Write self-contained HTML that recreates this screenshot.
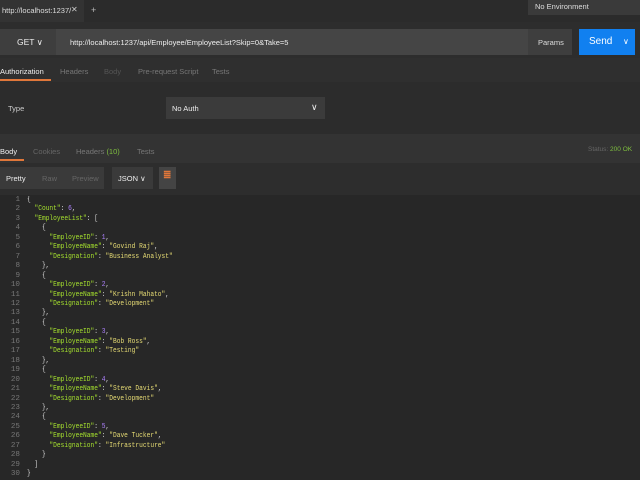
<!DOCTYPE html>
<html><head><style>
*{margin:0;padding:0;box-sizing:border-box}
body{width:640px;height:480px;background:#2a2a2a;font-family:"Liberation Sans",sans-serif;font-size:8px;color:#ccc;position:relative;overflow:hidden}
.a{position:absolute}
.code{font-family:"Liberation Mono",monospace;font-size:7.6px;line-height:9.45px;white-space:pre}
.k{color:#a6e22e}.s{color:#e6db74}.n{color:#ae81ff}.p{color:#ddd}
</style></head><body>
<div class="a" style="left:0;top:0;width:640px;height:22px;background:#2b2b2b"></div>
<div class="a" style="left:0;top:0;width:84px;height:22px;background:#333"></div>
<div class="a" style="left:2px;top:6px;color:#ddd;font-size:7.5px">http://localhost:1237/</div>
<div class="a" style="left:71px;top:5px;color:#ccc;font-size:8px">✕</div>
<div class="a" style="left:91px;top:5px;color:#bbb;font-size:9px">+</div>
<div class="a" style="left:528px;top:0;width:112px;height:15px;background:#3a3a3a"></div>
<div class="a" style="left:535px;top:2px;color:#ddd;font-size:7.5px">No Environment</div>
<div class="a" style="left:0;top:22px;width:640px;height:36px;background:#2d2d2d"></div>
<div class="a" style="left:0;top:29px;width:572px;height:26px;background:#454545"></div>
<div class="a" style="left:0;top:29px;width:56px;height:26px;background:#3e3e3e"></div>
<div class="a" style="left:17px;top:37px;color:#eee;font-size:8.5px">GET &#x2228;</div>
<div class="a" style="left:70px;top:38px;color:#eee;font-size:7.5px">http://localhost:1237/api/Employee/EmployeeList?Skip=0&amp;Take=5</div>
<div class="a" style="left:528px;top:29px;width:44px;height:26px;background:#3e3e3e"></div>
<div class="a" style="left:538px;top:38px;color:#ddd;font-size:7.5px">Params</div>
<div class="a" style="left:579px;top:29px;width:56px;height:26px;background:#1180f0"></div>
<div class="a" style="left:589px;top:36px;color:#fff;font-size:10px">Send</div>
<div class="a" style="left:623px;top:37px;color:#fff;font-size:8px">&#x2228;</div>
<div class="a" style="left:0;top:58px;width:640px;height:24px;background:#2f2f2f"></div>
<div class="a" style="left:0;top:67px;color:#eee;font-size:7.5px">Authorization</div>
<div class="a" style="left:0;top:79px;width:51px;height:2px;background:#e0773a"></div>
<div class="a" style="left:60px;top:67px;color:#777;font-size:7.5px">Headers</div>
<div class="a" style="left:104px;top:67px;color:#555;font-size:7.5px">Body</div>
<div class="a" style="left:138px;top:67px;color:#777;font-size:7.5px">Pre-request Script</div>
<div class="a" style="left:212px;top:67px;color:#777;font-size:7.5px">Tests</div>
<div class="a" style="left:0;top:82px;width:640px;height:52px;background:#2c2c2c"></div>
<div class="a" style="left:8px;top:104px;color:#ccc;font-size:7.5px">Type</div>
<div class="a" style="left:166px;top:97px;width:159px;height:22px;background:#3b3b3b"></div>
<div class="a" style="left:172px;top:104px;color:#eee;font-size:7.5px">No Auth</div>
<div class="a" style="left:311px;top:102px;color:#eee;font-size:9px">&#x2228;</div>
<div class="a" style="left:0;top:134px;width:640px;height:29px;background:#333"></div>
<div class="a" style="left:0;top:147px;color:#eee;font-size:7.5px">Body</div>
<div class="a" style="left:0;top:159px;width:24px;height:2px;background:#e0773a"></div>
<div class="a" style="left:33px;top:147px;color:#666;font-size:7.5px">Cookies</div>
<div class="a" style="left:76px;top:147px;color:#777;font-size:7.5px">Headers <span style="color:#7fbf3f">(10)</span></div>
<div class="a" style="left:137px;top:147px;color:#777;font-size:7.5px">Tests</div>
<div class="a" style="left:588px;top:146px;color:#666;font-size:6.5px">Status: <span style="color:#7fbf3f">200 OK</span></div>
<div class="a" style="left:0;top:163px;width:640px;height:32px;background:#2d2d2d"></div>
<div class="a" style="left:0;top:167px;width:104px;height:22px;background:#3a3a3a"></div>
<div class="a" style="left:6px;top:174px;color:#eee;font-size:7.5px">Pretty</div>
<div class="a" style="left:42px;top:174px;color:#666;font-size:7.5px">Raw</div>
<div class="a" style="left:72px;top:174px;color:#666;font-size:7.5px">Preview</div>
<div class="a" style="left:112px;top:167px;width:41px;height:22px;background:#3a3a3a"></div>
<div class="a" style="left:118px;top:174px;color:#eee;font-size:7.5px">JSON &#x2228;</div>
<div class="a" style="left:159px;top:167px;width:17px;height:22px;background:#444"></div>
<div class="a" style="left:163px;top:170px;color:#e0773a;font-size:10px;font-weight:bold">&#x2263;</div>
<div class="a" style="left:0;top:195px;width:640px;height:285px;background:#272727"></div>
<div class="a code" style="left:0;top:196px;width:20px;text-align:right;color:#777">1
2
3
4
5
6
7
8
9
10
11
12
13
14
15
16
17
18
19
20
21
22
23
24
25
26
27
28
29
30</div>
<div class="a code p" style="left:27px;top:196px;transform:scaleX(.82);transform-origin:0 0">{
  <span class="k">"Count"</span>: <span class="n">6</span>,
  <span class="k">"EmployeeList"</span>: [
    {
      <span class="k">"EmployeeID"</span>: <span class="n">1</span>,
      <span class="k">"EmployeeName"</span>: <span class="s">"Govind Raj"</span>,
      <span class="k">"Designation"</span>: <span class="s">"Business Analyst"</span>
    },
    {
      <span class="k">"EmployeeID"</span>: <span class="n">2</span>,
      <span class="k">"EmployeeName"</span>: <span class="s">"Krishn Mahato"</span>,
      <span class="k">"Designation"</span>: <span class="s">"Development"</span>
    },
    {
      <span class="k">"EmployeeID"</span>: <span class="n">3</span>,
      <span class="k">"EmployeeName"</span>: <span class="s">"Bob Ross"</span>,
      <span class="k">"Designation"</span>: <span class="s">"Testing"</span>
    },
    {
      <span class="k">"EmployeeID"</span>: <span class="n">4</span>,
      <span class="k">"EmployeeName"</span>: <span class="s">"Steve Davis"</span>,
      <span class="k">"Designation"</span>: <span class="s">"Development"</span>
    },
    {
      <span class="k">"EmployeeID"</span>: <span class="n">5</span>,
      <span class="k">"EmployeeName"</span>: <span class="s">"Dave Tucker"</span>,
      <span class="k">"Designation"</span>: <span class="s">"Infrastructure"</span>
    }
  ]
}</div>
</body></html>
